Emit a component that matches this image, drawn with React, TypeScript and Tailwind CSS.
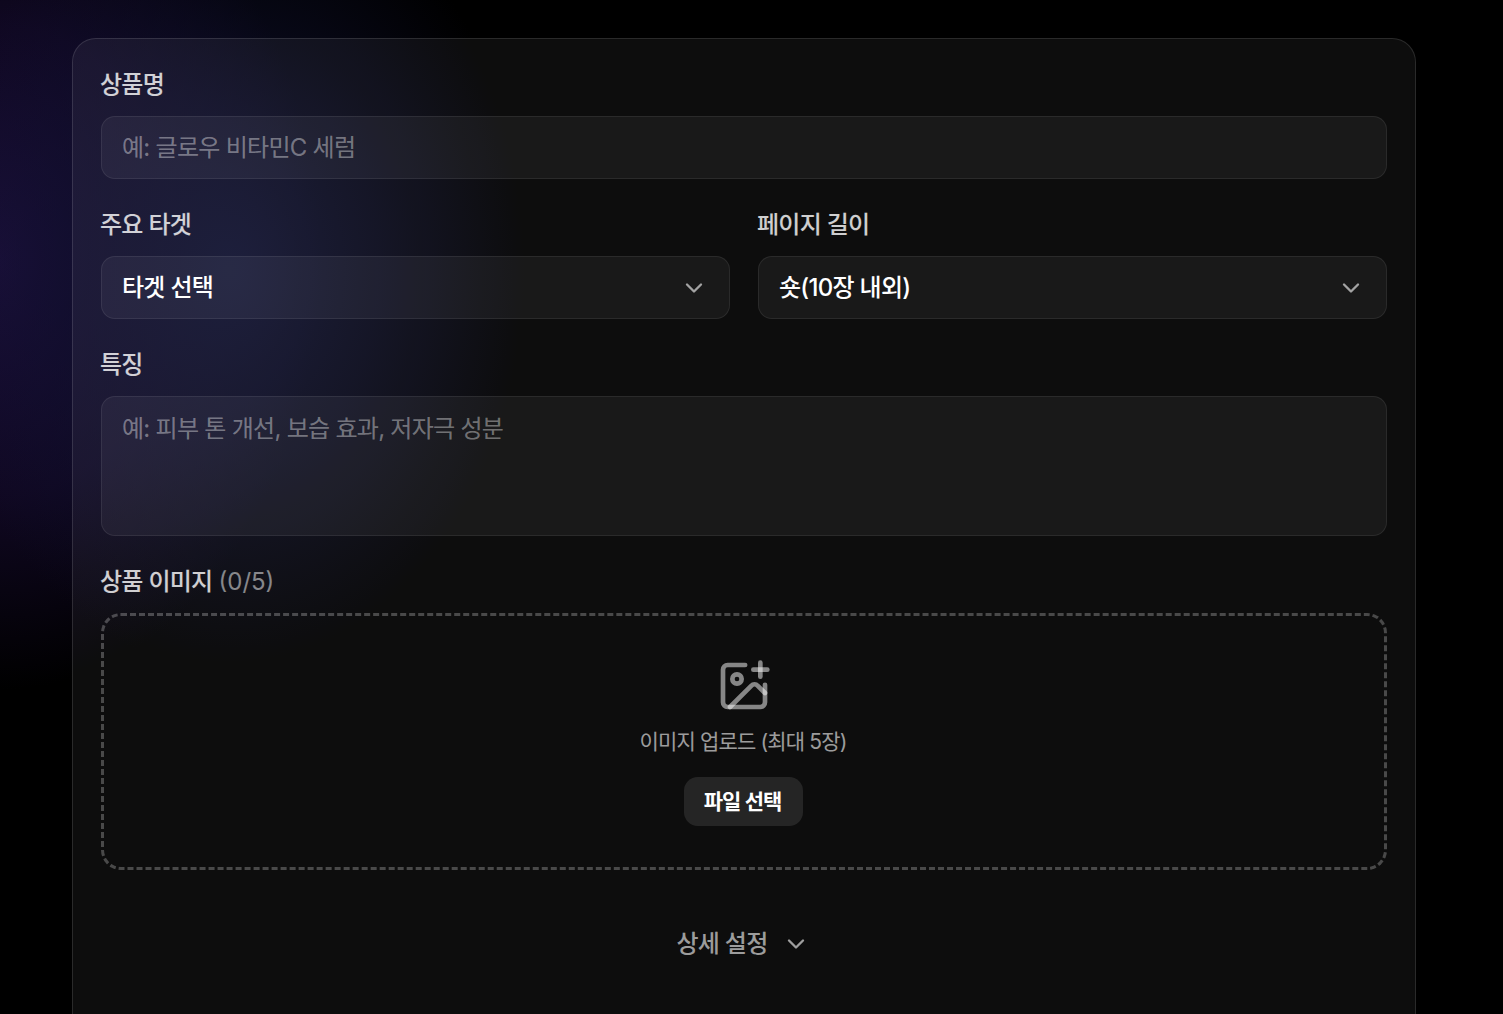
import { ChevronDown, ImagePlus } from "lucide-react";

const font = "font-['Inter','Noto_Sans_CJK_KR','Noto_Sans',sans-serif]";
const labelCls = "h-[34px] mb-[15px] -ml-px pt-[2px] flex items-center text-[24px] tracking-[-0.72px] leading-[32px] font-medium text-white/80";
const fieldCls =
  "w-full bg-white/5 border border-white/[0.08] rounded-[14px] px-[20px] text-[24px] tracking-[-0.72px] outline-none";

function Select({ value }: { value: string }) {
  return (
    <div className={`${fieldCls} h-[63px] flex items-center justify-between font-medium text-white pr-[21px]`}>
      <span>{value}</span>
      <ChevronDown className="w-[28px] h-[28px] text-white/60" strokeWidth={2} />
    </div>
  );
}

export default function App() {
  return (
    <div
      className={`h-screen overflow-hidden bg-black pt-[38px] pl-[72px] bg-[radial-gradient(ellipse_300px_400px_at_230px_270px,rgba(17,19,50,1),rgba(15,16,46,0.6)_50%,rgba(10,10,40,0)_100%),radial-gradient(ellipse_320px_430px_at_0px_260px,rgba(27,15,58,1),rgba(24,12,52,0.65)_55%,rgba(20,10,50,0)_100%)] ${font}`}
    >
      <div className="w-[1344px] h-[1100px] bg-white/5 border border-white/[0.12] rounded-[24px] px-[28px] pt-[28px]">
        <div className={labelCls}>상품명</div>
        <input
          className={`${fieldCls} h-[63px] block text-white placeholder:text-white/40`}
          placeholder="예: 글로우 비타민C 세럼"
        />

        <div className="grid grid-cols-2 gap-[28px] mt-[28px]">
          <div>
            <div className={labelCls}>주요 타겟</div>
            <Select value="타겟 선택" />
          </div>
          <div>
            <div className={labelCls}>페이지 길이</div>
            <Select value="숏(10장 내외)" />
          </div>
        </div>

        <div className={`${labelCls} mt-[28px]`}>특징</div>
        <textarea
          className={`${fieldCls} h-[140px] block resize-none py-[15px] leading-[34px] text-white placeholder:text-white/40`}
          placeholder="예: 피부 톤 개선, 보습 효과, 저자극 성분"
        />

        <div className={`${labelCls} mt-[28px]`}>
          상품 이미지<span className="ml-[6px] tracking-normal font-normal text-white/50">(0/5)</span>
        </div>
        <div className="h-[257px] border-[3px] border-dashed border-white/25 rounded-[20px] flex flex-col items-center pt-[42px]">
          <ImagePlus className="w-[56px] h-[56px] text-white/50" strokeWidth={2} />
          <div className="mt-[12px] pr-[2px] text-[21px] tracking-[-0.85px] leading-[32px] text-white/60">이미지 업로드 (최대 5장)</div>
          <button className="mt-[19px] -ml-px pr-[2px] w-[119px] h-[49px] bg-white/10 rounded-[14px] text-[21px] tracking-[-1px] font-semibold text-white">
            파일 선택
          </button>
        </div>

        <div className="mt-[57px] pr-[2px] h-[34px] flex items-center justify-center gap-[14px] text-[24px] tracking-[-0.72px] font-medium text-white/60">
          <span>상세 설정</span>
          <ChevronDown className="w-[28px] h-[28px]" strokeWidth={2} />
        </div>
      </div>
    </div>
  );
}
